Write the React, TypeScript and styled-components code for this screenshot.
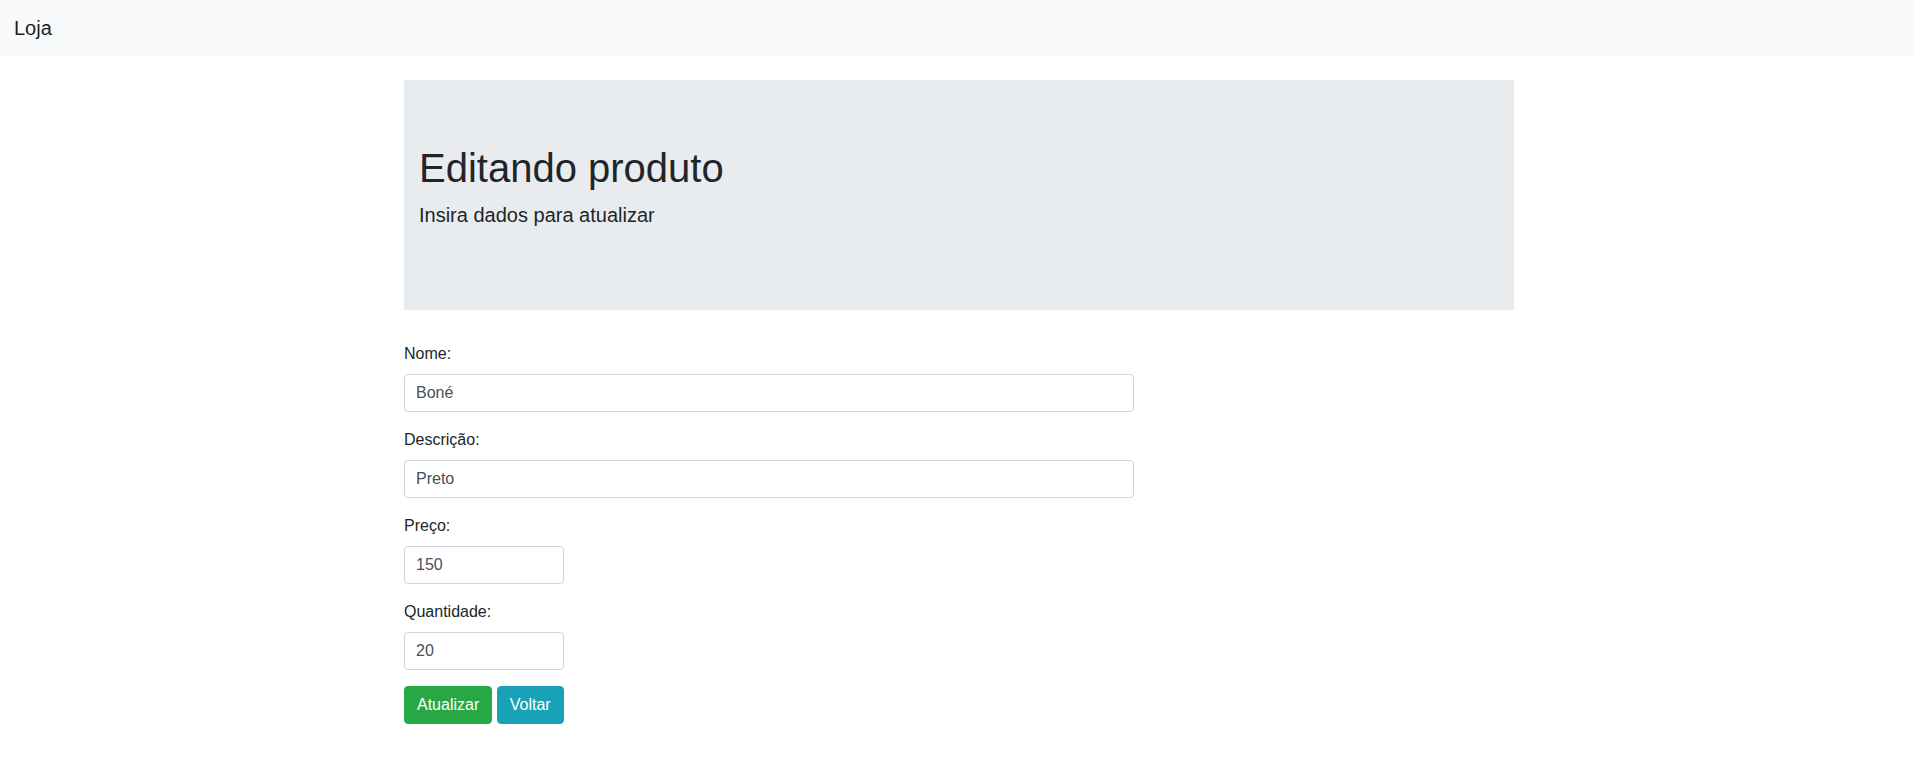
import React, { useState } from "react";
import styled, { createGlobalStyle } from "styled-components";

const GlobalStyle = createGlobalStyle`
  * {
    box-sizing: border-box;
  }
  body {
    margin: 0;
    font-family: "Liberation Sans", Arial, sans-serif;
    font-size: 16px;
    line-height: 1.5;
    color: #212529;
    background-color: #fff;
  }
`;

const Navbar = styled.nav`
  display: flex;
  align-items: center;
  height: 56px;
  padding: 8px 14px;
  background-color: #f8f9fa;
`;

const Brand = styled.a`
  padding: 5px 0;
  font-size: 20px;
  line-height: 30px;
  color: rgba(0, 0, 0, 0.9);
  text-decoration: none;
`;

const Container = styled.main`
  max-width: 1140px;
  margin: 24px auto 0;
  padding: 0 13px 0 17px;
`;

const Jumbotron = styled.section`
  background-color: #e9ecef;
  padding: 64px 15px;
  margin-bottom: 32px;
`;

const Title = styled.h1`
  margin: 0 0 8px;
  font-size: 40px;
  font-weight: 500;
  line-height: 1.2;
`;

const Lead = styled.p`
  margin: 0 0 16px;
  font-size: 20px;
  font-weight: 300;
  line-height: 30px;
`;

const Form = styled.form`
  display: flex;
  flex-direction: column;
`;

const FormGroup = styled.div`
  display: flex;
  flex-direction: column;
  align-items: flex-start;
  margin-bottom: 16px;
`;

const Label = styled.label`
  margin-bottom: 8px;
  line-height: 24px;
`;

const Input = styled.input<{ $width: number }>`
  width: ${(p) => p.$width}px;
  height: 38px;
  padding: 6px 12px 6px 11px;
  font-family: inherit;
  font-size: 16px;
  line-height: 1.5;
  color: #495057;
  background-color: #fff;
  border: 1px solid #ced4da;
  border-radius: 4px;
  outline: none;
`;

const Actions = styled.div`
  display: flex;
  gap: 4.5px;
`;

const Button = styled.button<{ $variant: "success" | "info" }>`
  height: 38px;
  padding: 6px 12px;
  font-family: inherit;
  font-size: 16px;
  line-height: 1.5;
  color: #fff;
  border: 1px solid ${(p) => (p.$variant === "success" ? "#28a745" : "#17a2b8")};
  background-color: ${(p) => (p.$variant === "success" ? "#28a745" : "#17a2b8")};
  border-radius: 4px;
  cursor: pointer;
`;

const App = () => {
  const [produto, setProduto] = useState({
    nome: "Boné",
    descricao: "Preto",
    preco: "150",
    quantidade: "20",
  });

  const campos = [
    { key: "nome", label: "Nome:", width: 730 },
    { key: "descricao", label: "Descrição:", width: 730 },
    { key: "preco", label: "Preço:", width: 160 },
    { key: "quantidade", label: "Quantidade:", width: 160 },
  ] as const;

  return (
    <>
      <GlobalStyle />
      <Navbar>
        <Brand href="#">Loja</Brand>
      </Navbar>
      <Container>
        <Jumbotron>
          <Title>Editando produto</Title>
          <Lead>Insira dados para atualizar</Lead>
        </Jumbotron>
        <Form onSubmit={(e) => e.preventDefault()}>
          {campos.map((campo) => (
            <FormGroup key={campo.key}>
              <Label htmlFor={campo.key}>{campo.label}</Label>
              <Input
                id={campo.key}
                $width={campo.width}
                value={produto[campo.key]}
                onChange={(e) => setProduto({ ...produto, [campo.key]: e.target.value })}
              />
            </FormGroup>
          ))}
          <Actions>
            <Button type="submit" $variant="success">Atualizar</Button>
            <Button type="button" $variant="info">Voltar</Button>
          </Actions>
        </Form>
      </Container>
    </>
  );
};

export default App;
